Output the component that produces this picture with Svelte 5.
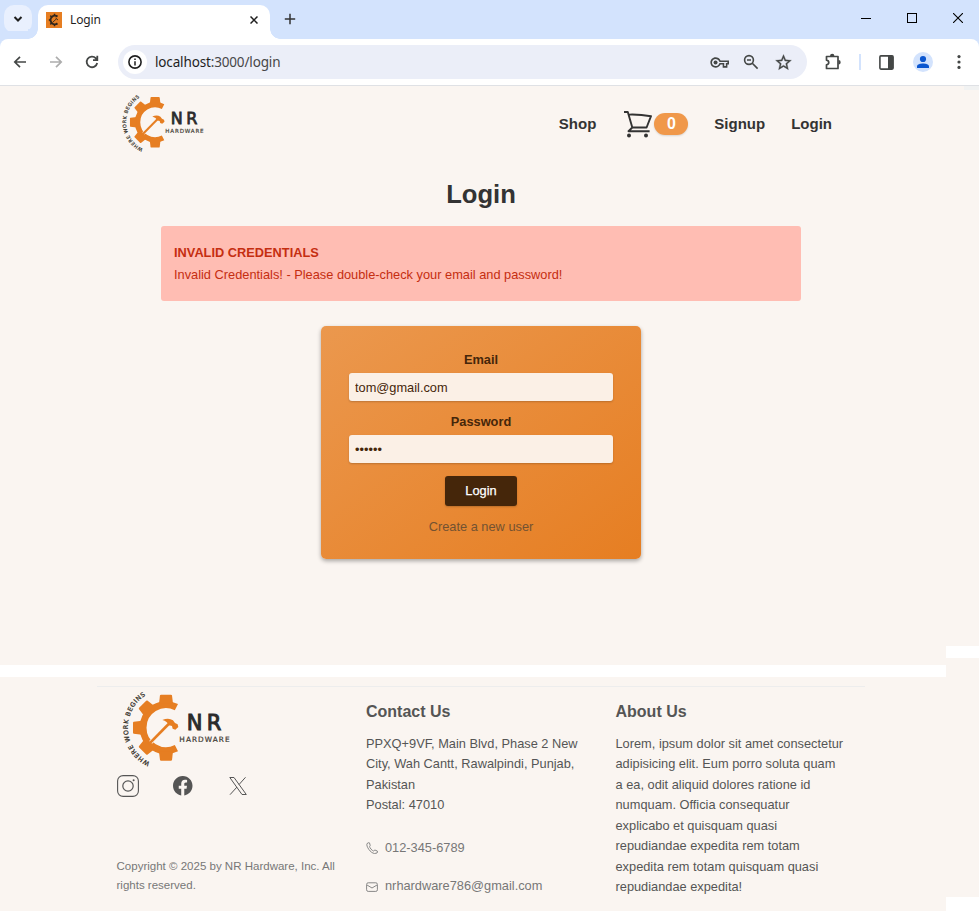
<script>
  const address = [
    'PPXQ+9VF, Main Blvd, Phase 2 New',
    'City, Wah Cantt, Rawalpindi, Punjab,',
    'Pakistan',
    'Postal: 47010'
  ];
  const about = [
    'Lorem, ipsum dolor sit amet consectetur',
    'adipisicing elit. Eum porro soluta quam',
    'a ea, odit aliquid dolores ratione id',
    'numquam. Officia consequatur',
    'explicabo et quisquam quasi',
    'repudiandae expedita rem totam',
    'expedita rem totam quisquam quasi',
    'repudiandae expedita!'
  ];
  const teeth = [0, -45, -90, -135, 180];
</script>

{#snippet logo(id)}
  <svg class="logo {id}" viewBox="90 100 340 240">
    <defs><path id="motto-{id}" d="M184 325A115 115 0 0 1 184 113" /></defs>
    <path d="M259.300 157.500A69 69 0 1 0 259.300 280.500" fill="none" stroke="#e67e22" stroke-width="21" />
    {#each teeth as angle}
      <path d="M207 147L210 122Q211 120 213 120H243Q245 120 246 122L249 147Z" fill="#e67e22" transform="rotate({angle} 228 219)" />
    {/each}
    <path d="M182 263L238 205" stroke="#faf5f1" stroke-width="12" />
    <path d="M178 267L239 205" stroke="#e67e22" stroke-width="8" />
    <path d="M217 196Q236 188 249 197L255 205L263 209L265 217L256 225L248 222L246 214L237 212Q232 200 217 196Z" fill="#e67e22" />
    <text class="motto"><textPath href="#motto-{id}" startOffset="4" textLength="246" lengthAdjust="spacing">WHERE WORK BEGINS</textPath></text>
    <text class="nr" x="290" y="226" textLength="104" lengthAdjust="spacing">NR</text>
    <text class="hw" x="268" y="263" textLength="151" lengthAdjust="spacing">HARDWARE</text>
  </svg>
{/snippet}

<div class="window">
  <div class="tabstrip">
    <div class="dropdown">
      <svg width="10" height="8" viewBox="0 0 10 8"><path d="M1.500 2L5 5.500L8.500 2" fill="none" stroke="#1f1f1f" stroke-width="2" /></svg>
    </div>
    <div class="tab">
      <svg class="favicon" width="16" height="16" viewBox="0 0 16 16">
        <rect width="16" height="16" fill="#e67e22" />
        <path d="M11.500 4.600A4.300 4.300 0 1 0 11.500 11.400" fill="none" stroke="#30261c" stroke-width="2" />
        <path d="M8.500 1.800V4M4.300 3.600L6 5.200M2.800 8H5M4.300 12.400L6 10.800M8.500 14.200V12" stroke="#30261c" stroke-width="1.500" />
        <path d="M7 10L10.500 6.800M9.500 6L12 8" stroke="#30261c" stroke-width=".9" />
      </svg>
      <span>Login</span>
      <svg class="close" width="8" height="8" viewBox="0 0 8 8"><path d="M.5 .5L7.500 7.500M7.500 .5L.5 7.500" stroke="#1f1f1f" stroke-width="1.500" /></svg>
    </div>
    <svg class="plus" width="12" height="12" viewBox="0 0 12 12"><path d="M6 .8V11.200M.8 6H11.200" stroke="#333" stroke-width="1.500" /></svg>
    <div class="controls">
      <svg width="10" height="10" viewBox="0 0 10 10"><path d="M0 5.500H10" stroke="#000" /></svg>
      <svg width="10" height="10" viewBox="0 0 10 10"><rect x=".5" y=".5" width="9" height="9" fill="none" stroke="#000" /></svg>
      <svg width="10" height="10" viewBox="0 0 10 10"><path d="M0 0L10 10M10 0L0 10" stroke="#000" stroke-width="1.100" /></svg>
    </div>
  </div>

  <div class="toolbar">
    <svg class="nav" viewBox="0 0 16 16" fill="none" stroke="#444746" stroke-width="1.700"><path d="M14 8H3M8 2.800L2.800 8L8 13.200" /></svg>
    <svg class="nav" viewBox="0 0 16 16" fill="none" stroke="#adadad" stroke-width="1.700"><path d="M2 8H13M8 2.800L13.200 8L8 13.200" /></svg>
    <svg class="nav" viewBox="0 0 16 16" fill="none" stroke="#444746" stroke-width="1.800"><path d="M13.200 9A5.300 5.300 0 1 1 11.900 4.300L13 5.600M13.300 1.800V6.200H9" /></svg>
    <div class="omnibox">
      <div class="info">
        <svg width="14" height="14" viewBox="0 0 14 14"><circle cx="7" cy="7" r="6.100" fill="none" stroke="#1f1f1f" stroke-width="1.600" /><path d="M7 6.200V10.400M7 3.600V5.100" stroke="#1f1f1f" stroke-width="1.500" /></svg>
      </div>
      <span class="url"><b>localhost</b>:3000/login</span>
      <svg class="key" width="19" height="19" viewBox="0 0 24 24" fill="#444746"><path d="M22 18.500h-6v-4h-2.680c-1.140 2.420-3.600 4-6.320 4-3.600 0-6.500-2.900-6.500-6.500s2.900-6.500 6.500-6.500c2.720 0 5.170 1.580 6.320 4H24v5h-2v4zm-4-2h2v-4h2v-1H11.940l-.23-.67C11.010 8.840 9.110 7.500 7 7.500c-2.500 0-4.500 2-4.500 4.500s2 4.500 4.500 4.500c2.110 0 4.010-1.340 4.710-3.330l.23-.67H18v4z" /><circle cx="7" cy="12" r="2.500" /></svg>
      <svg class="mag" width="16" height="16" viewBox="0 0 16 16" fill="none" stroke="#444746" stroke-width="1.600"><circle cx="6" cy="6" r="4.400" /><path d="M9.300 9.300L14.600 14.600M4 6H8" /></svg>
      <svg class="star" width="19" height="19" viewBox="0 0 24 24" fill="#444746" stroke="#444746" stroke-width=".4"><path d="M22 9.240l-7.190-.62L12 2 9.190 8.630 2 9.240l5.460 4.730L5.820 21 12 17.270 18.180 21l-1.630-7.030L22 9.240zM12 15.400l-3.760 2.270 1-4.280-3.320-2.880 4.380-.38L12 6.100l1.710 4.040 4.380.38-3.320 2.880 1 4.280L12 15.400z" /></svg>
    </div>
    <div class="actions">
      <svg width="18" height="18" viewBox="0 0 18 18"><path d="M2.500 3.500H14V15.500H2.500V11.800C5.500 11.300 5.500 7.700 2.500 7.200Z" fill="none" stroke="#444746" stroke-width="1.700" stroke-linejoin="round" /><path d="M6 3A2.200 2.200 0 0 1 10.400 3ZM14.500 7A2.200 2.200 0 0 1 14.500 11.400Z" fill="#444746" /></svg>
      <i class="divider"></i>
      <svg class="panel" width="15" height="15" viewBox="0 0 15 15"><rect x=".9" y=".9" width="13.200" height="13.200" rx="1" fill="none" stroke="#444746" stroke-width="1.600" /><path d="M9 1H14V14H9Z" fill="#444746" /></svg>
      <svg class="profile" width="20" height="20" viewBox="0 0 20 20"><circle cx="10" cy="10" r="10" fill="#d3e3fd" /><circle cx="10" cy="7" r="3.100" fill="#0b57d0" /><path d="M4 16V14.300C4 12.200 7.500 11.400 10 11.400S16 12.200 16 14.300V16Z" fill="#0b57d0" /></svg>
      <svg class="dots" width="4" height="16" viewBox="0 0 4 16" fill="#444746"><circle cx="2" cy="2.600" r="1.600" /><circle cx="2" cy="8" r="1.600" /><circle cx="2" cy="13.400" r="1.600" /></svg>
    </div>
  </div>

  <div class="viewport">
    <div class="content">
      <main>
        <header>
          {@render logo('small')}
          <nav>
            <a href="#shop">Shop</a>
            <a href="#cart" class="cart">
              <svg width="28" height="28" viewBox="0 0 28 28" fill="none" stroke="#333" stroke-width="1.900"><path d="M0 2H3.800L8.300 17.500H22.600L27 6.200Q16 4.300 5.300 4.600M8.300 17.500L4.500 21.200H25.600" stroke-linejoin="round" /><g fill="#333" stroke="none"><circle cx="5" cy="25.500" r="2" /><circle cx="22" cy="25.500" r="2" /></g></svg>
              <span class="badge">0</span>
            </a>
            <a href="#signup">Signup</a>
            <a href="#login">Login</a>
          </nav>
        </header>
        <h1>Login</h1>
        <div class="alert"><strong>INVALID CREDENTIALS</strong><span>Invalid Credentials! - Please double-check your email and password!</span></div>
        <form>
          <label for="email">Email</label>
          <input id="email" type="text" value="tom@gmail.com" />
          <label for="password">Password</label>
          <input id="password" type="password" value="secret" />
          <button type="button">Login</button>
          <a href="#create">Create a new user</a>
        </form>
      </main>
      <footer>
        <div class="cols">
          <div class="brand">
            {@render logo('large')}
            <div class="social">
              <svg width="22" height="22" viewBox="0 0 22 22" fill="none" stroke="#555"><rect x=".6" y=".6" width="20.800" height="20.800" rx="5.500" stroke-width="1.100" /><circle cx="11" cy="11" r="5.200" stroke-width="1.200" /><circle cx="16.600" cy="5.300" r="1" fill="#555" stroke="none" /></svg>
              <svg width="19.500" height="19.500" viewBox="0 0 16 16" fill="#555"><path d="M16 8.049c0-4.446-3.582-8.050-8-8.050C3.580 0 0 3.603 0 8.050c0 4.017 2.926 7.347 6.750 7.951v-5.625h-2.030V8.050H6.750V6.275c0-2.017 1.195-3.131 3.022-3.131.876 0 1.791.157 1.791.157v1.980h-1.009c-.993 0-1.303.621-1.303 1.258v1.510h2.218l-.354 2.326H9.250V16c3.824-.604 6.750-3.934 6.750-7.951" /></svg>
              <svg width="18" height="18" viewBox="0 0 18 18" fill="none" stroke="#555" stroke-width="1"><path d="M.8 .5H5L17.300 17.500H13ZM16.500 .3L10 7.600M8 10L1 17.700" /></svg>
            </div>
            <p class="copy"><span>Copyright © 2025 by NR Hardware, Inc. All</span><span>rights reserved.</span></p>
          </div>
          <div class="contact">
            <h2>Contact Us</h2>
            <p>{#each address as line}<span>{line}</span>{/each}</p>
            <a href="#tel"><svg width="12" height="12" viewBox="0 0 12 12" fill="none" stroke="#888" stroke-width="1"><path d="M2.800 .6L1 1.600C-.2 4 4.500 11.300 8.600 11.500L11 11Q11.700 10 11.300 9L8.900 8L7.600 9C6 8.600 3.700 6 3.600 4.500L4.200 3.500L3.500 .9Z" stroke-linejoin="round" /></svg>012-345-6789</a>
            <a href="#mail"><svg width="12" height="12" viewBox="0 0 12 12" fill="none" stroke="#888" stroke-width="1"><rect x=".6" y="1.800" width="10.800" height="8.600" rx="1.600" /><path d="M1 4L6 7L11 4" /></svg>nrhardware786@gmail.com</a>
          </div>
          <div class="about">
            <h2>About Us</h2>
            <p>{#each about as line}<span>{line}</span>{/each}</p>
          </div>
        </div>
      </footer>
    </div>
    <aside><i class="corner"></i><i class="upper"></i><i class="lower"></i></aside>
  </div>
</div>

<style>
  :global(body) { margin: 0; background: #fff; }
  .window, .window * { box-sizing: border-box; }
  .window { width: 979px; height: 911px; overflow: hidden; display: flex; flex-direction: column; background: #fff; font-family: "Liberation Sans", Arial, sans-serif; font-size: 12.8px; color: #333; }
  svg { display: block; flex: none; }
  a { color: inherit; text-decoration: none; }

  .tabstrip { height: 39px; flex: none; background: #d3e3fd; display: flex; padding: 5px 16px 0 4px; }
  .dropdown { width: 28px; height: 28px; border-radius: 10px; background: #e9f0fe; display: flex; align-items: center; justify-content: center; }
  .tab { position: relative; width: 232px; height: 34px; margin-left: 6px; padding: 0 12px 5px 8px; border-radius: 10px 10px 0 0; background: #fff; display: flex; align-items: center; font: 12px "Noto Sans", sans-serif; color: #1f1f1f; }
  .tab::before, .tab::after { content: ''; position: absolute; bottom: 0; width: 10px; height: 10px; }
  .tab::before { left: -10px; background: radial-gradient(circle at 0 0, #d3e3fd 9.5px, #fff 10px); }
  .tab::after { right: -10px; background: radial-gradient(circle at 100% 0, #d3e3fd 9.5px, #fff 10px); }
  .tab span { margin-left: 8px; letter-spacing: -.15px; }
  .close { margin-left: auto; }
  .plus { margin: 8px 0 0 14px; }
  .controls { margin: 8px 0 0 auto; display: flex; gap: 36px; }

  .toolbar { height: 47px; flex: none; border-bottom: 1px solid #dfe1e5; border-radius: 8px 8px 0 0; box-shadow: 0 -8px 0 #d3e3fd; background: #fff; display: flex; align-items: center; padding-left: 12px; }
  .nav { width: 16px; height: 16px; margin-right: 20px; }
  .omnibox { width: 689px; height: 34px; margin-left: -2px; border-radius: 17px; background: #ebeef8; display: flex; align-items: center; padding: 0 14.5px 0 5px; }
  .info { width: 24px; height: 24px; border-radius: 50%; background: #fff; display: flex; align-items: center; justify-content: center; }
  .url { margin-left: 8px; font: 13.5px "Noto Sans", sans-serif; letter-spacing: -.15px; color: #474747; }
  .url b { font-weight: 400; color: #1f1f1f; }
  .key { margin-left: auto; }
  .mag { margin-left: 14px; }
  .star { margin-left: 15px; }
  .actions { flex: 1; display: flex; align-items: center; padding-left: 17px; }
  .divider { width: 2px; height: 16px; margin-left: 17px; background: #d3e3fd; }
  .panel { margin-left: 18px; }
  .profile { margin-left: 19px; }
  .dots { margin-left: 24px; }

  .viewport { flex: 1; display: flex; }
  .content { width: 946px; display: flex; flex-direction: column; }
  aside { width: 33px; display: flex; flex-direction: column; align-items: flex-end; background: #faf5f1; }
  aside i { flex: none; }
  .corner { width: 15px; height: 4px; background: #f1f2f2; }
  .upper { width: 100%; height: 12px; margin-top: 556px; background: #fff; }
  .lower { width: 100%; height: 14px; margin-top: 239px; background: #fff; }
  main { height: 579px; flex: none; background: #faf5f1; display: flex; flex-direction: column; align-items: center; padding-left: 16px; }
  header { width: 768px; height: 76px; display: flex; align-items: center; padding: 0 33px 0 23px; }
  .logo { overflow: visible; }
  .logo.small { width: 86.500px; height: 61px; margin-top: -3px; }
  .logo.large { width: 113.300px; height: 80px; margin: 1px 0 0 23px; }
  .logo text { font-family: "DejaVu Sans", sans-serif; }
  .logo .motto { font: 19px "DejaVu Sans", sans-serif; fill: #333028; stroke: #333028; stroke-width: .8px; }
  .nr { font-size: 63px; fill: #2b2b2b; stroke: #2b2b2b; stroke-width: 3px; }
  .hw { font-size: 22px; fill: #444037; stroke: #444037; stroke-width: .7px; }
  nav { margin: -2px 0 0 auto; display: flex; align-items: center; font-size: 15px; font-weight: 700; }
  nav a + a { margin-left: 26px; }
  nav .cart { display: flex; align-items: center; gap: 2px; margin-left: 28px; padding-top: 2px; }
  .badge { width: 34px; height: 22px; border-radius: 11px; background: #f0984a; color: #fff; display: flex; align-items: center; justify-content: center; box-shadow: 0 1px 2px #0002; font-size: 16px; }
  h1 { margin: 17px 0 0; font-size: 25.600px; line-height: 30px; }
  .alert { width: 640px; height: 75px; margin-top: 17px; border-radius: 3px; background: #ffbdb3; color: #c52e10; padding: 16px 13px; display: flex; flex-direction: column; line-height: 22px; }
  form { width: 320px; height: 233px; margin-top: 25px; border-radius: 5px; background: linear-gradient(to bottom right, #eb984e, #e67e22); box-shadow: 0 2px 4px #0005; padding: 26px 28px 0; display: flex; flex-direction: column; align-items: center; color: #45260a; }
  label { font-weight: 700; line-height: 16px; }
  input { width: 264px; height: 28px; margin: 5px 0 13px; padding: 0 6px; border: 0; border-radius: 3px; background: #fbf0e6; box-shadow: 0 1px 2px #0003; font: 12.800px "Liberation Sans", Arial, sans-serif; color: #45260a; }
  button { width: 72px; height: 30px; padding: 0 0 2px; border: 0; border-radius: 3px; background: #45260a; box-shadow: 0 1px 2px #0003; color: #fff; font: 500 12.800px "Liberation Sans", Arial, sans-serif; -webkit-text-stroke: .25px #fff; }
  form a { margin-top: 13px; color: #735231; line-height: 16px; }

  footer { height: 234px; flex: none; margin-top: 12px; padding: 9px 0 0 97px; background: #faf5f1; }
  .cols { width: 768px; border-top: 1px solid #ededed; display: flex; color: #555; }
  .brand { width: 269px; }
  .social { display: flex; align-items: center; margin: 7px 0 0 20px; }
  .social svg + svg { margin-left: 34px; }
  .social svg:last-child { margin-left: 36.200px; }
  .copy { margin: 60px 0 0 19.500px; font-size: 11.520px; line-height: 19px; color: #777; }
  h2 { margin: 15px 0 12px; font-size: 16px; line-height: 20px; color: #555; }
  p { margin: 0; line-height: 20.480px; }
  p span { display: block; white-space: nowrap; }
  .contact { width: 249.500px; }
  .contact a { display: flex; align-items: center; gap: 7px; line-height: 20px; color: #777; margin-top: 22px; }
  .contact a + a { margin-top: 18.500px; }
  .contact a svg { margin-top: 1px; }
</style>
